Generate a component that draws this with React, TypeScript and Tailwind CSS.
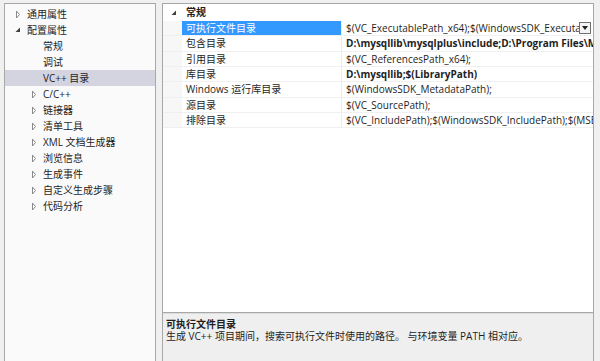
const font = { fontFamily: '"Open Sans", "Noto Sans CJK SC", sans-serif' }

const Arrow = ({ open }: { open?: boolean }) =>
  open ? (
    <svg width="6" height="6" viewBox="0 0 6 6" className="shrink-0">
      <path d="M5 0.5 L5 5 L0.5 5 Z" fill="#404040" />
    </svg>
  ) : (
    <svg width="6" height="9" viewBox="0 0 6 9" className="shrink-0">
      <path d="M1.5 1 L4.5 4.5 L1.5 8 Z" fill="#fff" stroke="#8a8a8a" />
    </svg>
  )

const treeItems = [
  { label: '通用属性', level: 0, arrow: 'closed' },
  { label: '配置属性', level: 0, arrow: 'open' },
  { label: '常规', level: 1 },
  { label: '调试', level: 1 },
  { label: 'VC++ 目录', level: 1, selected: true },
  { label: 'C/C++', level: 1, arrow: 'closed' },
  { label: '链接器', level: 1, arrow: 'closed' },
  { label: '清单工具', level: 1, arrow: 'closed' },
  { label: 'XML 文档生成器', level: 1, arrow: 'closed' },
  { label: '浏览信息', level: 1, arrow: 'closed' },
  { label: '生成事件', level: 1, arrow: 'closed' },
  { label: '自定义生成步骤', level: 1, arrow: 'closed' },
  { label: '代码分析', level: 1, arrow: 'closed' },
]

const props = [
  { name: '可执行文件目录', value: '$(VC_ExecutablePath_x64);$(WindowsSDK_ExecutablePath);$(VS_ExecutablePath)', selected: true },
  { name: '包含目录', value: 'D:\\mysqllib\\mysqlplus\\include;D:\\Program Files\\MySQL\\include;$(IncludePath)', bold: true },
  { name: '引用目录', value: '$(VC_ReferencesPath_x64);' },
  { name: '库目录', value: 'D:\\mysqllib;$(LibraryPath)', bold: true },
  { name: 'Windows 运行库目录', value: '$(WindowsSDK_MetadataPath);' },
  { name: '源目录', value: '$(VC_SourcePath);' },
  { name: '排除目录', value: '$(VC_IncludePath);$(WindowsSDK_IncludePath);$(MSBuild_ExecutablePath)' },
]

export default function App() {
  return (
    <div className="flex h-[361px] w-[600px] overflow-hidden bg-[#f0f0f0] pl-[4px] pt-[3px] text-[10px] text-[#1e1e1e]" style={font}>
      {/* tree */}
      <div className="h-[370px] w-[152px] shrink-0 border border-[#a8a8a8] bg-[#fafafa] pt-[2px]">
        {treeItems.map(item => (
          <div
            key={item.label}
            className={`flex h-[16px] items-center leading-[16px] ${item.selected ? 'bg-[#d4d4e0]' : ''}`}
          >
            <div className={`flex shrink-0 ${item.level === 0 ? 'w-[22px] pl-[10px]' : 'w-[38px] pl-[26px]'}`}>
              {item.arrow && <Arrow open={item.arrow === 'open'} />}
            </div>
            <span className="whitespace-nowrap">{item.label}</span>
          </div>
        ))}
      </div>

      {/* property grid */}
      <div className="ml-[6px] flex h-[370px] w-[432px] shrink-0 flex-col border border-[#a8a8a8] bg-white">
        <div className="h-[309px] overflow-hidden border-b border-[#a8a8a8]">
          <div className="flex h-[17px] items-center">
            <div className="flex w-[19px] shrink-0 pl-[8px]">
              <Arrow open />
            </div>
            <span className="pl-[4px] font-bold">常规</span>
          </div>
          {props.map(p => (
            <div key={p.name} className="flex h-[15.33px] border-b border-[#f0f0f0] leading-[14px]">
              <div className="w-[19px] shrink-0 bg-[#f7f7f7]" />
              <div
                className={`w-[160px] shrink-0 border-r border-[#ececec] pl-[4px] whitespace-nowrap ${p.selected ? 'bg-[#3399ff] text-white' : ''}`}
              >
                {p.name}
              </div>
              <div className={`flex min-w-0 flex-1 items-start pl-[4px] ${p.bold ? 'font-bold' : ''}`}>
                <span className="overflow-hidden whitespace-nowrap">{p.value}</span>
                {p.selected && (
                  <span className="ml-auto mr-[2px] mt-[1px] flex h-[12px] w-[12px] shrink-0 items-center justify-center border border-[#707070] bg-[#f3f3f3]">
                    <svg width="6" height="4" viewBox="0 0 6 4">
                      <path d="M0 0 L6 0 L3 4 Z" fill="#202020" />
                    </svg>
                  </span>
                )}
              </div>
            </div>
          ))}
        </div>
        <div className="flex-1 border-t border-[#dcdcdc] bg-[#efefef] px-[3px] pt-[4px] leading-[12px]">
          <div className="font-bold">可执行文件目录</div>
          <div className="whitespace-nowrap">生成 VC++ 项目期间，搜索可执行文件时使用的路径。 与环境变量 PATH 相对应。</div>
        </div>
      </div>
    </div>
  )
}
